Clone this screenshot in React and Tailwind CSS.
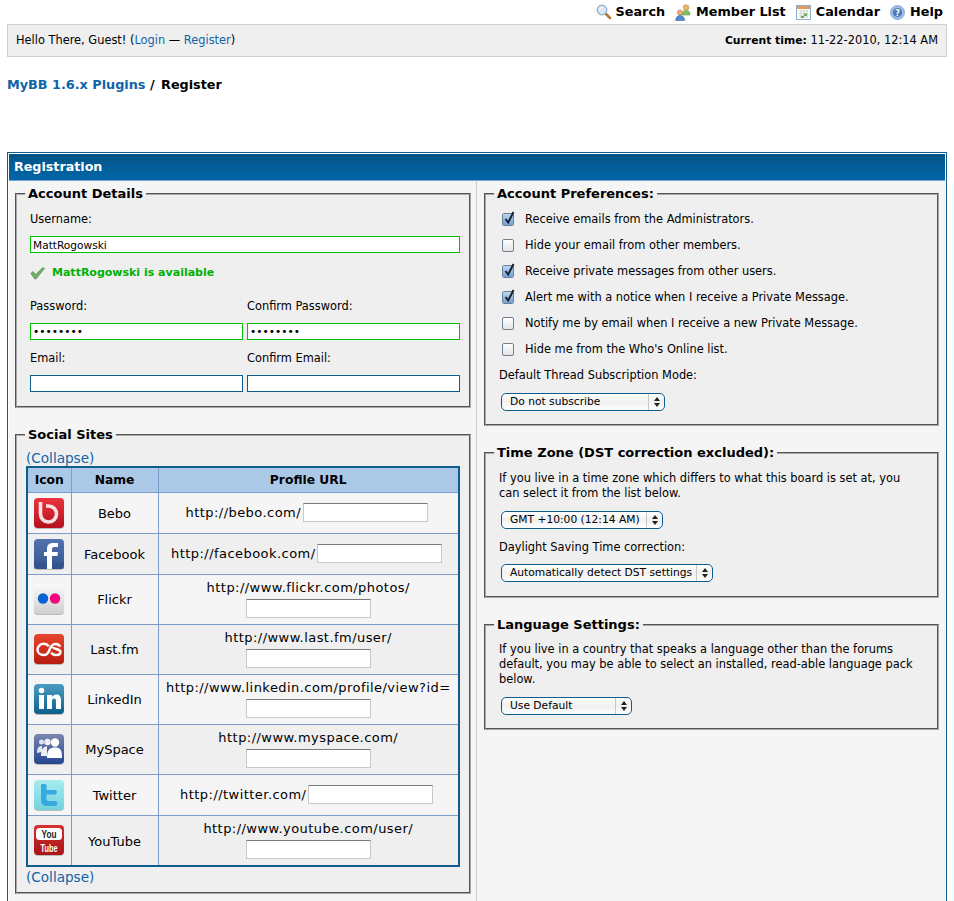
import React from 'react';

const textField = 'block h-[17px] bg-white border border-[#0f5c8e] px-[2px] text-[10.6px] leading-none text-black outline-none';
const greenField = 'block h-[17px] bg-white border border-[#00c000] px-[2px] text-[10.6px] leading-none text-black outline-none';
const urlField = 'block w-[125px] h-[19px] bg-white border border-[#c8c8c8] border-t-[#7a7a7a] outline-none';
const linkText = 'text-[#0f64a8]';

const Gloss = ({ id, from, to }) => (
    <linearGradient id={id} x1="0" y1="0" x2="0" y2="1">
        <stop offset="0" stopColor={from} />
        <stop offset="1" stopColor={to} />
    </linearGradient>
);

const IconBox = ({ id, from, to, children }) => (
    <svg width="32" height="32" viewBox="0 0 32 32" className="block">
        <defs><Gloss id={id} from={from} to={to} /></defs>
        <rect x="1" y="2" width="30" height="30" rx="4" fill="#bbb" />
        <rect x="1" y="1" width="30" height="30" rx="4" fill={`url(#${id})`} />
        {children}
    </svg>
);

const BeboIcon = () => (
    <IconBox id="bebo" from="#e8353f" to="#b5101c">
        <path d="M7.500 5 V17 A8 8 0 1 0 15.500 9 H13" fill="none" stroke="#f8e0e0" strokeWidth="3.600" />
    </IconBox>
);

const FacebookIcon = () => (
    <IconBox id="fb" from="#5273ad" to="#34558f">
        <rect x="1" y="24" width="30" height="7" fill="#2f4f88" opacity="0.45" />
        <path d="M14 31 V18 H11 V14 H14 V11 C14 7 16 5 20 5 H25 V9 H21 C19.500 9 19 10 19 11 V14 H25 L24.400 18 H19 V31 Z" fill="#fff" />
    </IconBox>
);

const FlickrIcon = () => (
    <IconBox id="fl" from="#fafafa" to="#cfcfcf">
        <circle cx="10" cy="15.500" r="5.200" fill="#0a63d0" />
        <circle cx="22" cy="15.500" r="5.200" fill="#f5057f" />
    </IconBox>
);

const LastfmIcon = () => (
    <IconBox id="lf" from="#e6452f" to="#b81c10">
        <path d="M15.800 13.200 C14.500 11.500 12.800 10.800 10.800 10.800 C7 10.800 4.500 13.500 4.500 16.500 C4.500 19.500 7 22 10.800 22 C14 22 15.500 19.800 16.500 17 C17.500 14 18.800 11 22.500 11 C25 11 26.500 12 27 13.800" fill="none" stroke="#fff" strokeWidth="2.400" />
        <path d="M20 14 C20 16.500 27.500 15.500 27.500 19 C27.500 21 25.500 22 23 22 C20.500 22 19 21 18.300 19.500" fill="none" stroke="#fff" strokeWidth="2.400" />
    </IconBox>
);

const LinkedinIcon = () => (
    <IconBox id="li" from="#4b9cc3" to="#0d5f8c">
        <rect x="6" y="12" width="5" height="14" fill="#fff" />
        <circle cx="8.500" cy="7.500" r="2.800" fill="#fff" />
        <path d="M14 12 H19 V14 C20 12.500 21.500 11.500 23.500 11.500 C27 11.500 28 14 28 17 V26 H23 V18 C23 16.500 22.500 15.500 21 15.500 C19.500 15.500 19 16.500 19 18 V26 H14 Z" fill="#fff" />
    </IconBox>
);

const MyspaceIcon = () => (
    <IconBox id="ms" from="#7a86ae" to="#24468f">
        <circle cx="8.500" cy="9" r="2.500" fill="#dfe4f0" />
        <circle cx="14.500" cy="9" r="3.200" fill="#eef0f6" />
        <circle cx="22" cy="9.500" r="4.200" fill="#fff" />
        <path d="M4 20 C4 14 6 13 9 13 V19 Z" fill="#dfe4f0" />
        <path d="M8 23 C8 15 11 13.500 14 13.500 L14 23 Z" fill="#eef0f6" />
        <path d="M14 25 C14 16 17 14.500 22 14.500 C27 14.500 29 16 29 25 Z" fill="#fff" />
    </IconBox>
);

const TwitterIcon = () => (
    <IconBox id="tw" from="#a7ebee" to="#72d3de">
        <path d="M8 6 C8 4.800 13.500 4.800 13.500 6 V11 H22 C24.500 11 24.500 15.500 22 15.500 H13.500 V20 C13.500 21.500 14.500 22 16 22 H22 C25 22 25 27 22 27 H14 C10 27 8 25 8 21 Z" fill="#35a9e0" />
    </IconBox>
);

const YoutubeIcon = () => (
    <IconBox id="yt" from="#d5322f" to="#a81417">
        <rect x="3" y="4" width="26" height="12" rx="3.500" fill="#fff" />
        <text x="16" y="14" textAnchor="middle" fontFamily="'Liberation Sans Narrow','Liberation Sans',sans-serif" fontSize="10" fontWeight="700" fill="#222" textLength="15" lengthAdjust="spacingAndGlyphs">You</text>
        <text x="16" y="27.500" textAnchor="middle" fontFamily="'Liberation Sans Narrow','Liberation Sans',sans-serif" fontSize="10" fontWeight="700" fill="#fff" textLength="17" lengthAdjust="spacingAndGlyphs">Tube</text>
    </IconBox>
);

const SearchIcon = () => (
    <svg width="16" height="16" viewBox="0 0 16 16">
        <path d="M9.500 9.500 L14 14" stroke="#b5763a" strokeWidth="2.600" strokeLinecap="round" />
        <circle cx="6" cy="6" r="4.800" fill="#d6e6f6" stroke="#8fadc9" strokeWidth="1.200" />
        <path d="M3.500 6 A3 3 0 0 1 6 3.300" fill="none" stroke="#fff" strokeWidth="1" />
    </svg>
);

const MembersIcon = () => (
    <svg width="17" height="17" viewBox="0 0 17 17">
        <circle cx="11" cy="3.500" r="2.800" fill="#eeb36a" stroke="#c58a42" strokeWidth="0.600" />
        <path d="M7 11 C7 7.500 9 6.500 11 6.500 C13.500 6.500 15 7.500 15 11 Z" fill="#7fc060" stroke="#5a9a40" strokeWidth="0.600" />
        <circle cx="5" cy="8.500" r="2.600" fill="#eeb070" stroke="#b97f45" strokeWidth="0.600" />
        <path d="M0.700 16.500 C0.700 13 3 11.500 5 11.500 C7.500 11.500 9.500 13 9.500 16.500 Z" fill="#4f8fd0" stroke="#34679f" strokeWidth="0.600" />
    </svg>
);

const CalendarIcon = () => (
    <svg width="15" height="15" viewBox="0 0 15 15">
        <rect x="0.500" y="0.500" width="14" height="14" fill="#fdfdf6" stroke="#8cb0d6" />
        <rect x="1" y="1" width="13" height="3" fill="#e89a5a" />
        <path d="M3 6 H12 M3 8.500 H12 M3 11 H12 M5 5 V13 M8 5 V13 M11 5 V13" stroke="#c5c5d5" strokeWidth="0.700" />
        <rect x="8" y="8.500" width="3" height="2.500" fill="#6ab04c" />
        <rect x="5" y="11" width="3" height="2" fill="#6ab04c" />
    </svg>
);

const HelpIcon = () => (
    <svg width="15" height="15" viewBox="0 0 15 15">
        <circle cx="7.500" cy="7.500" r="7" fill="#9fbde4" stroke="#7f9fce" strokeWidth="0.800" />
        <circle cx="7.500" cy="7.500" r="4.600" fill="#4f78b5" />
        <text x="7.500" y="10.500" textAnchor="middle" fontFamily="'DejaVu Sans',sans-serif" fontSize="8" fontWeight="700" fill="#fff">?</text>
    </svg>
);

const CheckMark = () => (
    <svg width="15" height="14" viewBox="0 0 15 14">
        <path d="M0.800 7.500 L3 5.500 L5.500 8.500 L13 1.500 L14.500 2.500 L6 13 L4.800 13 Z" fill="#6fae68" stroke="#4b8c46" strokeWidth="0.600" />
    </svg>
);

const Checkbox = ({ checked }) => (
    <span className="relative block w-[12px] h-[13px] shrink-0 rounded-[2px] border border-[#6f7f90] bg-gradient-to-b from-[#ffffff] to-[#e4e4e4]">
        {checked && <span className="absolute inset-0 rounded-[1px] bg-gradient-to-b from-[#bcd6f4] to-[#6ea1da]" />}
        {checked && (
            <svg width="15" height="16" viewBox="0 0 15 16" className="absolute left-[-1px] top-[-4px]">
                <path d="M3.500 9 L6.200 12.500 L11.500 2" fill="none" stroke="#1a1f30" strokeWidth="2" />
            </svg>
        )}
    </span>
);

const Select = ({ label, width }) => (
    <div className={`flex h-[18px] ${width} rounded-[5px] border border-[#0f5c8e] bg-gradient-to-b from-[#ffffff] via-[#f0f0f0] to-[#ffffff] text-[10.7px] leading-none`}>
        <span className="flex-1 self-center pl-2 whitespace-nowrap">{label}</span>
        <span className="w-[16px] flex flex-col items-center justify-center gap-[2px] border-l border-[#c8c8c8]">
            <span className="w-0 h-0 border-l-[3px] border-r-[3px] border-b-[4px] border-l-transparent border-r-transparent border-b-[#222]" />
            <span className="w-0 h-0 border-l-[3px] border-r-[3px] border-t-[4px] border-l-transparent border-r-transparent border-t-[#222]" />
        </span>
    </div>
);

const Group = ({ title, className, inner = 'pl-[13px] pr-[9px]', children }) => (
    <fieldset className={`border-2 [border-style:groove] border-[#a8a8a8] bg-[#efefef] ${className}`}>
        <legend className="ml-[8px] px-[3px] text-[13px] leading-[17px] font-bold text-black">{title}</legend>
        <div className={inner}>{children}</div>
    </fieldset>
);

const prefs = [
    ['Receive emails from the Administrators.', true],
    ['Hide your email from other members.', false],
    ['Receive private messages from other users.', true],
    ['Alert me with a notice when I receive a Private Message.', true],
    ['Notify me by email when I receive a new Private Message.', false],
    ["Hide me from the Who's Online list.", false],
];

const sites = [
    { name: 'Bebo', url: 'http://bebo.com/', Icon: BeboIcon, h: 'h-[41px]', inline: true },
    { name: 'Facebook', url: 'http://facebook.com/', Icon: FacebookIcon, h: 'h-[41px]', inline: true },
    { name: 'Flickr', url: 'http://www.flickr.com/photos/', Icon: FlickrIcon, h: 'h-[50px]' },
    { name: 'Last.fm', url: 'http://www.last.fm/user/', Icon: LastfmIcon, h: 'h-[50px]' },
    { name: 'LinkedIn', url: 'http://www.linkedin.com/profile/view?id=', Icon: LinkedinIcon, h: 'h-[50px]' },
    { name: 'MySpace', url: 'http://www.myspace.com/', Icon: MyspaceIcon, h: 'h-[50px]' },
    { name: 'Twitter', url: 'http://twitter.com/', Icon: TwitterIcon, h: 'h-[41px]', inline: true },
    { name: 'YouTube', url: 'http://www.youtube.com/user/', Icon: YoutubeIcon, h: 'h-[51px]' },
];

const App = () => {
    return (
        <div className="h-[901px] overflow-hidden bg-white px-[7px] font-['DejaVu_Sans',Verdana,sans-serif] text-[11.4px] text-black">
            {/* top menu */}
            <div className="flex justify-end items-center gap-[10px] h-[24px] pr-[4px] text-[12.8px] font-bold">
                <a className="flex items-center gap-[4px]"><SearchIcon />Search</a>
                <a className="flex items-center gap-[4px]"><MembersIcon />Member List</a>
                <a className="flex items-center gap-[5px]"><CalendarIcon />Calendar</a>
                <a className="flex items-center gap-[5px]"><HelpIcon />Help</a>
            </div>

            <div className="flex justify-between items-center h-[33px] px-[8px] bg-[#efefef] border border-[#cfcfcf]">
                <span>Hello There, Guest! (<a className={linkText}>Login</a> — <a className={linkText}>Register</a>)</span>
                <span><b className="text-[10.8px]">Current time:</b> 11-22-2010, 12:14 AM</span>
            </div>

            <div className="mt-[19px] text-[12.8px] leading-[18px] font-bold">
                <a className={linkText}>MyBB 1.6.x Plugins</a> / <span className="ml-[2px]">Register</span>
            </div>

            {/* registration table */}
            <div className="mt-[58px] border border-[#0f5c8e] p-px bg-white">
                <div className="h-[27px] flex items-center px-[5px] bg-gradient-to-b from-[#045486] to-[#0066a9] border-b border-[#7ba3c9] text-[12.7px] font-bold text-white">Registration</div>
                <div className="grid grid-cols-[468px_1fr] bg-[#f5f5f5] h-[800px]">
                    <div className="pl-[6px] pr-[5px] pt-[4px] border-r border-[#cfcfcf]">
                        <Group title="Account Details" className="h-[223px]">
                            <div className="pt-[10px] leading-[14px]">Username:</div>
                            <input readOnly value="MattRogowski" className={`${greenField} mt-[10px] w-full`} />
                            <div className="mt-[12px] flex items-center gap-[7px] text-[11px] text-[#00b000] font-bold">
                                <CheckMark />MattRogowski is available
                            </div>
                            <div className="mt-[17px] grid grid-cols-2 gap-x-[4px]">
                                <div className="leading-[14px]">Password:</div>
                                <div className="leading-[14px]">Confirm Password:</div>
                                <input readOnly type="password" value="password" className={`${greenField} mt-[10px] w-full`} />
                                <input readOnly type="password" value="password" className={`${greenField} mt-[10px] w-full`} />
                                <div className="mt-[11px] leading-[14px]">Email:</div>
                                <div className="mt-[11px] leading-[14px]">Confirm Email:</div>
                                <input readOnly className={`${textField} mt-[10px] w-full`} />
                                <input readOnly className={`${textField} mt-[10px] w-full`} />
                            </div>
                        </Group>

                        <Group title="Social Sites" className="mt-[18px] h-[468px]" inner="pl-[9px] pr-[9px]">
                            <a className={`block h-[16px] mt-[7px] text-[13.6px] leading-[16px] ${linkText}`}>(Collapse)</a>
                            <table className="w-[434px] table-fixed border-collapse border-2 border-[#0f5c8e] text-[13px] text-center">
                                <thead>
                                    <tr className="h-[25px] bg-[#abc9e6] font-bold text-[12.3px]">
                                        <th className="w-[44px] border border-[#7c9dc9]">Icon</th>
                                        <th className="w-[87px] border border-[#7c9dc9]">Name</th>
                                        <th className="border border-[#7c9dc9]">Profile URL</th>
                                    </tr>
                                </thead>
                                <tbody>
                                    {sites.map(({ name, url, Icon, h, inline }, i) => (
                                        <tr key={name} className={`${h} ${i % 2 === 0 ? 'bg-[#f5f5f5]' : 'bg-[#efefef]'}`}>
                                            <td className="border border-[#7c9dc9] pl-[5px]"><Icon /></td>
                                            <td className="border border-[#7c9dc9] pt-[2px]">{name}</td>
                                            <td className="border border-[#7c9dc9] px-0 tracking-[0.45px]">
                                                {inline ? (
                                                    <div className="flex justify-center items-center gap-[2px] pr-[3px]">
                                                        <span>{url}</span>
                                                        <input readOnly className={urlField} />
                                                    </div>
                                                ) : (
                                                    <div className="flex flex-col items-center gap-[3px]">
                                                        <span className="whitespace-nowrap leading-[16px]">{url}</span>
                                                        <input readOnly className={urlField} />
                                                    </div>
                                                )}
                                            </td>
                                        </tr>
                                    ))}
                                </tbody>
                            </table>
                            <a className={`block mt-[1px] text-[13.6px] leading-[18px] ${linkText}`}>(Collapse)</a>
                        </Group>
                    </div>

                    <div className="pl-[7px] pr-[6px] pt-[4px]">
                        <Group title="Account Preferences:" className="h-[241px]" inner="px-[13px]">
                            <div className="flex flex-col pt-[4px]">
                                {prefs.map(([label, checked]) => (
                                    <label key={label} className="h-[26px] flex items-center gap-[11px] pl-[3px] pt-[1px]">
                                        <Checkbox checked={checked} />
                                        {label}
                                    </label>
                                ))}
                            </div>
                            <div className="mt-[6px] leading-[14px]">Default Thread Subscription Mode:</div>
                            <div className="mt-[11px] pl-[2px]"><Select label="Do not subscribe" width="w-[164px]" /></div>
                        </Group>

                        <Group title="Time Zone (DST correction excluded):" className="mt-[18px] h-[154px]" inner="px-[13px]">
                            <p className="mt-[10px] leading-[15px]">If you live in a time zone which differs to what this board is set at, you can select it from the list below.</p>
                            <div className="mt-[10px] pl-[2px]"><Select label="GMT +10:00 (12:14 AM)" width="w-[162px]" /></div>
                            <div className="mt-[11px] leading-[14px]">Daylight Saving Time correction:</div>
                            <div className="mt-[10px] pl-[2px]"><Select label="Automatically detect DST settings" width="w-[212px]" /></div>
                        </Group>

                        <Group title="Language Settings:" className="mt-[18px] h-[114px]" inner="px-[13px]">
                            <p className="mt-[9px] leading-[15px]">If you live in a country that speaks a language other than the forums default, you may be able to select an installed, read-able language pack below.</p>
                            <div className="mt-[10px] pl-[2px]"><Select label="Use Default" width="w-[131px]" /></div>
                        </Group>
                    </div>
                </div>
            </div>
        </div>
    );
};

export default App;
